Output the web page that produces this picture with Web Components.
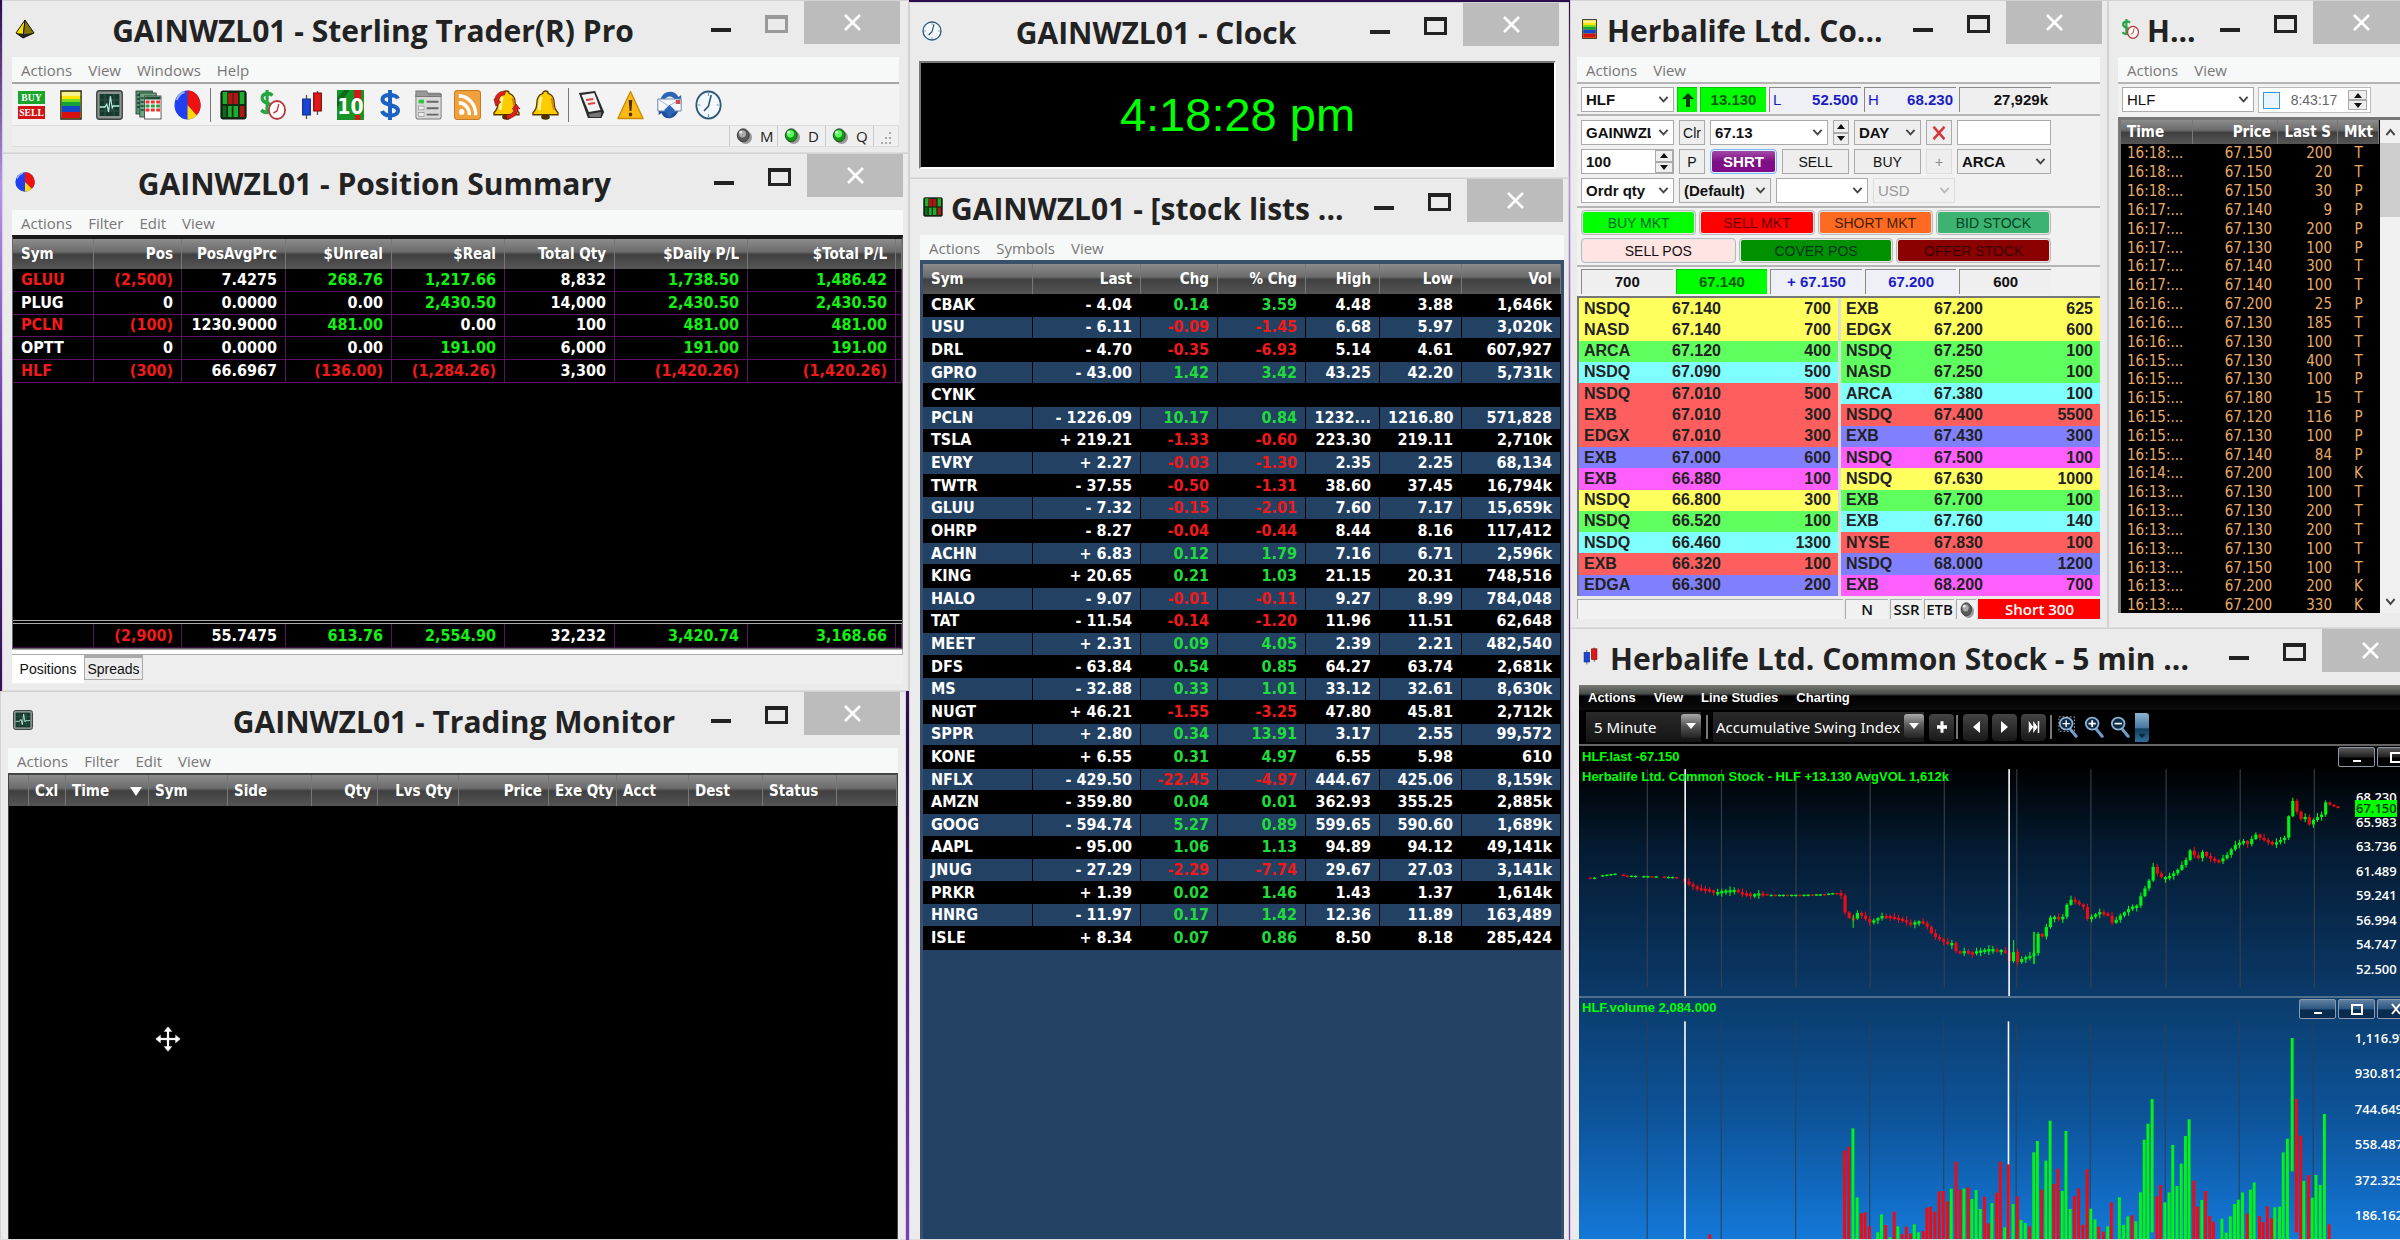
<!DOCTYPE html>
<html lang="en">
<head>
<meta charset="utf-8">
<title>Sterling Trader Pro</title>
<style>
  html, body { margin: 0; height: 100%; }
  body { background: #3a1466; font-family: "Open Sans", "Noto Sans", sans-serif; overflow: hidden; }
</style>
</head>
<body>
<trader-desktop></trader-desktop>

<script>
/* ---------- icons ---------- */
const led = (a, b) => `<svg viewBox="0 0 20 22"><ellipse cx="12" cy="13" rx="8" ry="9" fill="#9a9a9a"/><ellipse cx="9" cy="10" rx="7.5" ry="9" fill="${b}" stroke="#333" stroke-width="1"/><ellipse cx="8" cy="8" rx="4.5" ry="5" fill="${a}"/><circle cx="6" cy="6" r="1.8" fill="#fff" opacity=".8"/></svg>`;
const bell = `<path d="M14 1c1.800 0 2.800 1 2.800 2.400 4.400 1.300 6.200 5 6.200 9.600 0 5 1 7 4 9.800v2H1v-2C4 20 5 18 5 13c0-4.600 1.800-8.300 6.200-9.600C11.200 2 12.200 1 14 1z" fill="#fc0" stroke="#5a3a00" stroke-width="1.400"/><path d="M10 7c-2 3-2 8-2.500 13" stroke="#fff3a0" stroke-width="3" fill="none"/><path d="M20 8c1.500 3 1 8 3 12" stroke="#d88a00" stroke-width="2" fill="none"/><ellipse cx="14" cy="27" rx="4.500" ry="2.800" fill="#4a3000"/>`;
const lens = inner => `<svg viewBox="0 0 22 26"><path d="M13 15l7 9" stroke="#6f9cc8" stroke-width="3.500" stroke-linecap="round"/><circle cx="9" cy="9" r="7" fill="#0d2a48" stroke="#8fb2d4" stroke-width="2"/>${inner}</svg>`;
const ICONS = {
  pyramid: `<svg viewBox="0 0 20 20"><path d="M10 1L1 14l7 5z" fill="#ffe100" stroke="#111"/><path d="M10 1l9 13-11 5z" fill="#877500" stroke="#111"/><path d="M1 14l7 5 11-5-9 1z" fill="#222"/></svg>`,
  pie: `<svg viewBox="0 0 28 30"><ellipse cx="14" cy="15" rx="13.500" ry="14.500" fill="#1f3ff0"/><path d="M14 .5a13.500 14.500 0 0 1 9.500 24.800L14 15z" fill="#ee1111"/><path d="M14 15l9.500 10.300A13.500 14.500 0 0 1 14 29.500z" fill="#ffd800"/><path d="M3 10a12 12 0 0 1 8-8" stroke="#9bb0ff" stroke-width="2" fill="none"/></svg>`,
  monitor: `<svg viewBox="0 0 30 30"><rect x=".8" y=".8" width="28.400" height="28.400" rx="3" fill="#8c9390" stroke="#3c4440" stroke-width="1.500"/><rect x="4" y="4" width="22" height="22" fill="#17382c"/><path d="M4 10h22M4 21h22M10 4v22M20 4v22" stroke="#2d5c4b"/><path d="M4 17h6l2-3 2 8 2-16 2 12 1-2h7" fill="none" stroke="#b7efe0" stroke-width="1.300"/></svg>`,
  buysell: `<svg viewBox="0 0 28 30"><rect y="1" width="28" height="13" fill="#17a52a"/><rect y="16" width="28" height="13" fill="#cf1414"/><text x="14" y="11" font-family="Liberation Serif, serif" font-size="10" font-weight="700" text-anchor="middle" fill="#fff">BUY</text><text x="14" y="26" font-family="Liberation Serif, serif" font-size="10" font-weight="700" text-anchor="middle" fill="#fff">SELL</text></svg>`,
  level: `<svg viewBox="0 0 24 30"><rect x="1" y="1" width="22" height="28" fill="#ffe600" stroke="#222" stroke-width="1.500"/><rect x="2" y="2" width="20" height="4" fill="#f6f08a"/><rect x="2" y="9" width="20" height="4" fill="#7bdc1c"/><rect x="2" y="12" width="20" height="4" fill="#12a33c"/><rect x="2" y="16" width="20" height="6" fill="#1546c8"/><rect x="2" y="22" width="20" height="6" fill="#d81010"/></svg>`,
  sheets: `<svg viewBox="0 0 28 30"><g stroke="#333" stroke-width=".8"><rect x="1" y="1" width="17" height="23" fill="#4f9a6a"/><rect x="5" y="3" width="17" height="24" fill="#6aa880"/><rect x="10" y="6" width="17" height="23" fill="#fff"/></g><path d="M10.500 8h16" stroke="#1d4f34" stroke-width="3"/><path d="M11 12h15M11 20h15" stroke="#e33" stroke-width="3" stroke-dasharray="4 1.500"/><path d="M11 16h15" stroke="#2b9d45" stroke-width="3" stroke-dasharray="4 1.500"/><path d="M2 5h3M2 9h3M2 13h3M2 17h3M6 8h3M6 12h3M6 16h3M6 20h3" stroke="#234" stroke-width="1.500"/></svg>`,
  heat: `<svg viewBox="0 0 30 30"><rect x="1" y="1" width="28" height="28" rx="2" fill="#0f2d12" stroke="#111"/><g fill="#1fae2c"><rect x="3" y="2" width="5" height="12"/><rect x="22" y="2" width="5" height="12"/><rect x="9" y="16" width="4" height="11"/><rect x="15" y="16" width="5" height="11"/></g><g fill="#0c6a1c"><rect x="3" y="16" width="4" height="11"/></g><g fill="#b31515"><rect x="9" y="3" width="5" height="11"/><rect x="15" y="3" width="5" height="11"/><rect x="22" y="16" width="5" height="11"/></g></svg>`,
  dollarclock: `<svg viewBox="0 0 30 30"><path d="M15 5.500C12 2.500 3 3 3.500 8.500s11 4 11 9.500-9 5.500-12 2M9 0v24" fill="none" stroke="#27a544" stroke-width="3.500"/><circle cx="20" cy="20" r="9" fill="#fff" stroke="#b83a3a" stroke-width="2"/><path d="M22 14l-2 7-4 2" stroke="#c33" stroke-width="1.500" fill="none"/></svg>`,
  candles: `<svg viewBox="0 0 20 30"><path d="M5 5v24M15 1v24" stroke="#555" stroke-width="1.200"/><rect x="1.500" y="9" width="7" height="16" fill="#1a45d8" stroke="#0a2c80"/><rect x="11.500" y="3" width="7" height="18" fill="#e01818" stroke="#7d0909"/></svg>`,
  ten: `<svg viewBox="0 0 30 30"><rect width="30" height="30" fill="#169425"/><path d="M0 8L8 0h6L0 18zM18 0h5v6z" fill="#0c6a18"/><path d="M19 0h8v9l-4 4-4-4zM20 25h6v5h-6z" fill="#cf1a1a"/><text x="15" y="24" font-family="DejaVu Sans, sans-serif" font-weight="700" font-size="21" text-anchor="middle" fill="#fff">10</text></svg>`,
  dollar: `<svg viewBox="0 0 22 30"><path d="M19 8.500C17 4 3.500 3 3.500 9.500S19 14 19 20.500 5 27 3 21M11 0v30" fill="none" stroke="#1b62c4" stroke-width="4"/></svg>`,
  list: `<svg viewBox="0 0 30 28"><rect x="1" y="3" width="28" height="24" rx="2" fill="#d8d8d8" stroke="#777"/><path d="M1 6V1h12l2 3h14v2z" fill="#999" stroke="#777"/><path d="M13 11h13M13 17h13M13 23h13" stroke="#666" stroke-width="1.800"/><rect x="4" y="9" width="6" height="3.500" fill="#35c23f"/><rect x="4" y="15" width="6" height="3.500" fill="#eee" stroke="#888" stroke-width=".6"/><rect x="4" y="21" width="6" height="3.500" fill="#eee" stroke="#888" stroke-width=".6"/></svg>`,
  rss: `<svg viewBox="0 0 28 28"><rect x=".5" y=".5" width="27" height="27" rx="3" fill="#f0a03c" stroke="#c87a1c"/><circle cx="8" cy="20.500" r="2.800" fill="#fff"/><path d="M5 12a11 11 0 0 1 11 11.500M5 5.500A17.500 17.500 0 0 1 22.500 23.500" fill="none" stroke="#fff" stroke-width="3.400"/></svg>`,
  bellout: `<svg viewBox="0 0 28 30">${bell}<path d="M2 9C3 4 7 1 13 1l-1 4C8 5 6 7 6 11l2 1-5 4-2-7zM26 18c0 6-4 10-12 11v-4c4 0 7-2 8-5l-2-1 4-5 4 5z" fill="#d8201c" stroke="#8d0c0a" stroke-width=".7"/></svg>`,
  bell: `<svg viewBox="0 0 28 30">${bell}</svg>`,
  pad: `<svg viewBox="0 0 30 30"><path d="M1 3L19 1l10 21-3 6H11z" fill="#2b2b2b"/><path d="M4 5l14-2 7 17-13 2z" fill="#f4f4f4"/><path d="M9 10l8-1M11 14l8-1" stroke="#d44" stroke-width="1.800"/><path d="M12 24l14-2-1 5H13z" fill="#777"/></svg>`,
  warn: `<svg viewBox="0 0 30 30"><path d="M15 1.500L29 28.500H1z" fill="#fdb913" stroke="#c98a05" stroke-width="1.500" stroke-linejoin="round"/><path d="M13 10h4l-1 11h-2z" fill="#4a2c00"/><circle cx="15" cy="24.500" r="1.900" fill="#4a2c00"/></svg>`,
  refresh: `<svg viewBox="0 0 30 30"><path d="M5 10C7 0 21-1 25 7l3-2v10h-9l3-4C19 5 11 5 9 11z" fill="#2a66b8"/><path d="M25 20c-3 10-16 11-19 3l-3 2V15h9l-3 4c3 6 10 6 12 1z" fill="#1d4f9c"/><path d="M2 9h26v12H2z" fill="#f6f9ff" stroke="#6a84ac"/><path d="M2 9l12 7L28 9" fill="none" stroke="#9db3d0"/><rect x="22" y="10" width="5" height="4" fill="#d04a4a"/><path d="M9 20l6-5 6 5-6 8z" fill="#2a66b8"/></svg>`,
  clock: `<svg viewBox="0 0 30 30"><circle cx="15" cy="15" r="13.500" fill="#f2f8fc" stroke="#2f5878" stroke-width="2"/><path d="M15 3v3M15 24v3M3 15h3M24 15h3" stroke="#7796ac" stroke-width="1.200"/><path d="M18 5l-3 11-5 5" fill="none" stroke="#27506e" stroke-width="1.700"/></svg>`,
  ledOff: led("#aaa", "#5a5a5a"), ledOn: led("#5dff5d", "#0d9a12"),
  chevron: `<svg viewBox="0 0 12 10"><path d="M1.500 2L6 7l4.500-5" fill="none" stroke="currentColor" stroke-width="2"/></svg>`,
  up: `<svg viewBox="0 0 14 18"><path d="M7 1l6 7H9v9H5V8H1z" fill="#063806"/></svg>`,
  cross: `<svg viewBox="0 0 14 14"><path d="M1.500 1.500l11 11M12.500 1.500l-11 11" stroke="#d8383c" stroke-width="2.400"/></svg>`,
  left: `<svg viewBox="0 0 12 14"><path d="M10 1v12L3 7z" fill="#fff"/></svg>`,
  right: `<svg viewBox="0 0 12 14"><path d="M2 1v12l7-6z" fill="#fff"/></svg>`,
  end: `<svg viewBox="0 0 16 14"><path d="M1 1v12l6-6zM7 1v12l6-6z" fill="#fff"/><path d="M14 1v12" stroke="#fff" stroke-width="2"/></svg>`,
  plus: `<svg viewBox="0 0 12 12"><path d="M6 1v10M1 6h10" stroke="#fff" stroke-width="3"/></svg>`,
  drop: `<svg viewBox="0 0 10 8"><path d="M0 1h10L5 7z" fill="#fff"/></svg>`,
  more: `<svg viewBox="0 0 10 8"><path d="M0 1h10L5 7z" fill="#0a2b42"/></svg>`,
  zoomBox: lens(`<path d="M9 5v8M5 9h8" stroke="#fff" stroke-width="1.500"/><rect x="1" y="1" width="17" height="17" fill="none" stroke="#a9c6e2" stroke-dasharray="2 2"/>`),
  zoomIn: lens(`<path d="M9 5v8M5 9h8" stroke="#fff" stroke-width="2"/>`),
  zoomOut: lens(`<path d="M5 9h8" stroke="#fff" stroke-width="2"/>`),
  move: `<svg viewBox="0 0 26 26"><path d="M13 0l5 6h-3.500v5.500H20V8l6 5-6 5v-3.500h-5.500V20H18l-5 6-5-6h3.500v-5.500H6V18l-6-5 6-5v3.500h5.500V6H8z" fill="#fff" stroke="#000" stroke-width=".8"/></svg>`
};

/* Small base class: every element renders its markup once into an open root. */
class Piece extends HTMLElement {
  connectedCallback() {
    if (this.shadowRoot) return;
    this.attachShadow({ mode: "open" }).innerHTML =
      `<style>*{box-sizing:border-box}${this.css()}</style>${this.html()}`;
  }
  css() { return ""; }
  html() { return "<slot></slot>"; }
  get(name, fallback = "") { return this.getAttribute(name) ?? fallback; }
}
const define = (name, cls) => customElements.define(name, cls);

define("app-icon", class extends Piece {
  css() { return `:host{display:block;flex:none;width:var(--w,20px);height:var(--h,20px)} svg{display:block;width:100%;height:100%;overflow:visible}`; }
  html() { return ICONS[this.get("name")].replace("<svg", '<svg aria-hidden="true" preserveAspectRatio="none"'); }
});

/* ---------- window frame ---------- */
define("desk-window", class extends Piece {
  css() { return `
    :host{display:flex;flex-direction:column;background:#ebebeb;border:1px solid #d2d2d2;border-bottom-color:#dcdcdc;min-width:0;min-height:0}
    header{display:flex;height:var(--bar,56px);flex:none;align-items:flex-start;padding:0 var(--hr,5px) 0 var(--lead,12px)}
    .ic{margin-top:18px;--w:var(--iw,20px);--h:var(--ih,20px)}
    h1{flex:1;min-width:0;height:100%;margin:0;padding-left:var(--title-pad,0);text-align:var(--align,center);font:700 30px/60px "Open Sans","Noto Sans",sans-serif;color:#222;white-space:nowrap;overflow:hidden}
    button{font:inherit;border:0;background:none;padding:0;margin:0;flex:none}
    .min{width:20px;height:31px;border-bottom:4px solid #222}
    .max{width:23px;height:18px;margin:14px 16px 0 34px;border:3px solid #222;border-top-width:4px}
    :host([idle]) .max{border-color:#999}
    .x{width:96px;height:43px;background:#bcbcbc;display:grid;place-items:center}
    .x svg{width:19px;height:17px}
    main{flex:1;min-height:0;display:flex;flex-direction:column;padding:0 var(--pr,6px) var(--pb,6px) var(--pl,9px)}`; }
  html() { return `<header><app-icon class="ic" name="${this.get("icon")}"></app-icon><h1>${this.get("heading")}</h1>
    <button class="min" aria-label="Minimize"></button><button class="max" aria-label="Maximize"></button>
    <button class="x" aria-label="Close"><svg viewBox="0 0 19 17"><path d="M2 1l15 15M17 1L2 16" stroke="#fff" stroke-width="2.600"/></svg></button></header>
    <main><slot></slot></main>`; }
});

define("menu-bar", class extends Piece {
  css() { return `
    :host{display:flex;flex:none;height:25px;background:#f7f8f8;align-items:center;gap:16px;padding-left:9px}
    button{border:0;background:none;padding:0;font:15px/20px "Open Sans","Noto Sans",sans-serif;color:#777}
    :host([dark]){background:linear-gradient(#777b73,#4a4d48 35%,#000 45%,#0c0c0c);gap:18px}
    :host([dark]) button{font:700 13px/20px "Liberation Sans",Arial,sans-serif;color:#fff}`; }
  html() { return this.get("items").split(",").map(i => `<button>${i}</button>`).join(""); }
});

/* ---------- data ---------- */
const lines = s => s.trim().split("\n").map(l => l.trim().split("|"));
const GRIDS = {
  positions: {
    cols: [["Sym",81,"l"],["Pos",88],["PosAvgPrc",104],["$Unreal",106],["$Real",113],["Total Qty",110],["$Daily P/L",133],["$Total P/L",148],["",0]],
    rows: lines(`r:GLUU|r:(2,500)|7.4275|g:268.76|g:1,217.66|8,832|g:1,738.50|g:1,486.42|
      PLUG|0|0.0000|0.00|g:2,430.50|14,000|g:2,430.50|g:2,430.50|
      r:PCLN|r:(100)|1230.9000|g:481.00|0.00|100|g:481.00|g:481.00|
      OPTT|0|0.0000|0.00|g:191.00|6,000|g:191.00|g:191.00|
      r:HLF|r:(300)|66.6967|r:(136.00)|r:(1,284.26)|3,300|r:(1,420.26)|r:(1,420.26)|`),
    css: `table{height:144px}tbody td{border-right:1px solid #5c1263;border-bottom:1px solid #5c1263}`
  },
  totals: {
    bare: true,
    cols: [["",81],["",88],["",104],["",106],["",113],["",110],["",133],["",148],["",0]],
    rows: lines(`|r:(2,900)|55.7475|g:613.76|g:2,554.90|32,232|g:3,420.74|g:3,168.66|`),
    css: `td{height:24px;border-right:1px solid #5c1263;border-bottom:1px solid #3c0a42}`
  },
  orders: {
    cols: [["",20],["Cxl",37,"l"],["Time",83,"l",1],["Sym",79,"l"],["Side",84,"l"],["Qty",66],["Lvs Qty",81],["Price",90],["Exe Qty",68,"l"],["Acct",72,"l"],["Dest",74,"l"],["Status",74,"l"],["",0]],
    rows: [], css: `th{height:31px;padding:0 6px}`
  },
  stocks: {
    cols: [["Sym",110,"l"],["Last",108],["Chg",77],["% Chg",88],["High",74],["Low",82],["Vol",0]],
    rows: lines(`CBAK|- 4.04|0.14|3.59|4.48|3.88|1,646k
      USU|- 6.11|-0.09|-1.45|6.68|5.97|3,020k
      DRL|- 4.70|-0.35|-6.93|5.14|4.61|607,927
      GPRO|- 43.00|1.42|3.42|43.25|42.20|5,731k
      CYNK||||||
      PCLN|- 1226.09|10.17|0.84|1232...|1216.80|571,828
      TSLA|+ 219.21|-1.33|-0.60|223.30|219.11|2,710k
      EVRY|+ 2.27|-0.03|-1.30|2.35|2.25|68,134
      TWTR|- 37.55|-0.50|-1.31|38.60|37.45|16,794k
      GLUU|- 7.32|-0.15|-2.01|7.60|7.17|15,659k
      OHRP|- 8.27|-0.04|-0.44|8.44|8.16|117,412
      ACHN|+ 6.83|0.12|1.79|7.16|6.71|2,596k
      KING|+ 20.65|0.21|1.03|21.15|20.31|748,516
      HALO|- 9.07|-0.01|-0.11|9.27|8.99|784,048
      TAT|- 11.54|-0.14|-1.20|11.96|11.51|62,648
      MEET|+ 2.31|0.09|4.05|2.39|2.21|482,540
      DFS|- 63.84|0.54|0.85|64.27|63.74|2,681k
      MS|- 32.88|0.33|1.01|33.12|32.61|8,630k
      NUGT|+ 46.21|-1.55|-3.25|47.80|45.81|2,712k
      SPPR|+ 2.80|0.34|13.91|3.17|2.55|99,572
      KONE|+ 6.55|0.31|4.97|6.55|5.98|610
      NFLX|- 429.50|-22.45|-4.97|444.67|425.06|8,159k
      AMZN|- 359.80|0.04|0.01|362.93|355.25|2,885k
      GOOG|- 594.74|5.27|0.89|599.65|590.60|1,689k
      AAPL|- 95.00|1.06|1.13|94.89|94.12|49,141k
      JNUG|- 27.29|-2.29|-7.74|29.67|27.03|3,141k
      PRKR|+ 1.39|0.02|1.46|1.43|1.37|1,614k
      HNRG|- 11.97|0.17|1.42|12.36|11.89|163,489
      ISLE|+ 8.34|0.07|0.86|8.50|8.18|285,424`)
      .map(r => r.map((c, i) => (i === 2 || i === 3) && c ? (c[0] === "-" ? "r:" : "s:") + c : c)),
    css: `table{height:686px}tbody tr{background:#000}tbody tr:nth-child(even){background:#234162}
      tbody td{border-bottom:1px solid #000;border-right:1px solid #000}`
  },
  ticks: {
    cols: [["Time",72,"l"],["Price",85],["Last S",60],["Mkt",41,"c"]],
    rows: lines(`16:18:...|67.150|200|T
      16:18:...|67.150|20|T
      16:18:...|67.150|30|P
      16:17:...|67.140|9|P
      16:17:...|67.130|200|P
      16:17:...|67.130|100|P
      16:17:...|67.140|300|T
      16:17:...|67.140|100|T
      16:16:...|67.200|25|P
      16:16:...|67.130|185|T
      16:16:...|67.130|100|T
      16:15:...|67.130|400|T
      16:15:...|67.130|100|P
      16:15:...|67.180|15|T
      16:15:...|67.120|116|P
      16:15:...|67.130|100|P
      16:15:...|67.140|84|P
      16:14:...|67.200|100|K
      16:13:...|67.130|100|T
      16:13:...|67.130|200|T
      16:13:...|67.130|200|T
      16:13:...|67.130|100|T
      16:13:...|67.150|100|T
      16:13:...|67.200|200|K
      16:13:...|67.200|330|K`),
    css: `table{height:495px}th{height:24px;padding:0 6px}td{font-weight:400;font-size:15px;line-height:18px;color:#e8aa66;padding:0 6px}`
  }
};

define("data-grid", class extends Piece {
  css() { return `
    :host{display:block;flex:none}
    table{border-collapse:separate;border-spacing:0;table-layout:fixed;width:100%;font:700 16px/20px "DejaVu Sans Condensed","DejaVu Sans",sans-serif;color:#fff}
    th,td{padding:0 8px;text-align:right;white-space:nowrap;overflow:hidden}
    th{height:30px;font-size:15px;background:linear-gradient(#8c8c8c,#6c6c6c 42%,#404040 52%,#565656);border-right:1px solid #777}
    .l{text-align:left}.c{text-align:center}
    th.sort span{float:right;width:0;border:6px solid transparent;border-top:9px solid #fff;border-bottom:0;margin:6px 0 0 0}
    .r{color:#f01a1a}.g{color:#14f014}.s{color:#1fdc3c}
    ${GRIDS[this.get("source")].css}`; }
  html() {
    const { cols, rows, bare } = GRIDS[this.get("source")];
    const cell = (c, i) => {
      const m = /^([rgs]):(.*)/.exec(c), cls = [cols[i][2], m && m[1]].filter(Boolean).join(" ");
      return `<td class="${cls}">${m ? m[2] : c}</td>`;
    };
    return `<table><colgroup>${cols.map(c => c[1] ? `<col style="width:${c[1]}px">` : "<col>").join("")}</colgroup>
      ${bare ? "" : `<thead><tr>${cols.map(c => `<th scope="col" class="${c[2] || ""} ${c[3] ? "sort" : ""}">${c[3] ? "<span></span>" : ""}${c[0]}</th>`).join("")}</tr></thead>`}
      <tbody>${rows.map(r => `<tr>${r.map(cell).join("")}</tr>`).join("")}</tbody></table>`;
  }
});

/* ---------- main toolbar ---------- */
define("main-tools", class extends Piece {
  css() { return `
    :host{display:flex;flex-direction:column;flex:1}
    .bar{display:flex;height:43px;align-items:center;border-top:2px solid #a5a5a5;background:#f3f3f3}
    button{width:39px;height:36px;border:0;padding:0;background:none;display:grid;place-items:center}
    app-icon{--w:27px;--h:30px}
    .narrow{--w:22px}
    i{width:1px;height:34px;background:#777;margin:0 3px}
    .status{flex:1;display:flex;justify-content:flex-end;border:1px solid #ddd;border-left:0;background:#efefef}
    .status span{width:48px;display:flex;align-items:center;gap:8px;padding-left:6px;border-left:1px solid #ccc;font:15px/20px "Open Sans",sans-serif;color:#222}
    .status app-icon{--w:16px;--h:16px}
    .grip{width:25px;border-left:1px solid #ccc;display:grid;place-items:end center}
    .grip svg{width:12px;height:14px}`; }
  html() {
    const b = (n, label) => `<button aria-label="${label}"><app-icon name="${n}" class="${/^(level|candles|dollar)$/.test(n) ? "narrow" : ""}"></app-icon></button>`;
    return `<div class="bar">${b("buysell","Order entry")}${b("level","Level II")}${b("monitor","Trading monitor")}${b("sheets","Order book")}${b("pie","Positions")}<i></i>
      ${b("heat","Stock list")}${b("dollarclock","Time and sales")}${b("candles","Chart")}${b("ten","Top ten")}${b("dollar","Balances")}${b("list","Watch list")}${b("rss","News")}${b("bellout","Alert setup")}${b("bell","Alerts")}<i></i>
      ${b("pad","Notes")}${b("warn","Warnings")}${b("refresh","Messages")}${b("clock","Clock")}</div>
      <div class="status"><span><app-icon name="ledOff"></app-icon>M</span><span><app-icon name="ledOn"></app-icon>D</span><span><app-icon name="ledOn"></app-icon>Q</span>
      <div class="grip"><svg viewBox="0 0 12 14" fill="#aaa"><path d="M9 0h2v2H9zM9 5h2v2H9zM9 10h2v2H9zM5 5h2v2H5zM5 10h2v2H5zM1 10h2v2H1z"/></svg></div></div>`;
  }
});

define("position-pane", class extends Piece {
  css() { return `
    :host{display:flex;flex-direction:column;flex:1}
    .list{flex:1;background:#000;border:1px solid #666;border-top:4px solid #1a1a1a;display:flex;flex-direction:column}
    .sum{margin-top:auto;border-top:4px double #aaa;background:#000}
    .strip{height:6px;background:#fff;border:1px solid #aaa;border-left:0}
    nav{display:flex;align-items:flex-start;height:29px;background:#efefef}
    nav button{border:0;background:#fff;font:14px/20px "Liberation Sans",Arial,sans-serif;color:#111;padding:0;width:72px;height:28px}
    nav button+button{width:59px;height:25px;background:#ececec;border:1px solid #aaa;border-top-width:3px;line-height:18px}`; }
  html() { return `<div class="list"><data-grid source="positions"></data-grid><data-grid class="sum" source="totals"></data-grid></div>
    <div class="strip"></div><nav><button>Positions</button><button>Spreads</button></nav>`; }
});

define("monitor-pane", class extends Piece {
  css() { return `
    :host{display:block;flex:1;background:#000;border:1px solid #444;border-width:2px 1px 0;position:relative}
    app-icon{position:absolute;left:146px;top:251px;--w:26px;--h:26px}`; }
  html() { return `<data-grid source="orders"></data-grid><app-icon name="move"></app-icon>`; }
});

define("clock-face", class extends Piece {
  css() { return `:host{flex:1;display:grid;place-items:center;background:#000;border:2px solid #777;border-right-color:#fff;border-bottom-color:#fff;color:#0f0;font:47px/52px "Liberation Sans",Arial,sans-serif}`; }
  html() { return `<time>4:18:28 pm</time>`; }
});

define("stock-pane", class extends Piece {
  css() { return `:host{display:block;flex:1;background:#234162;border:3px solid #39506c;border-top-width:4px;border-bottom:0}`; }
  html() { return `<data-grid source="stocks"></data-grid>`; }
});

/* ---------- form parts ---------- */
define("combo-box", class extends Piece {
  css() { return `
    :host{display:block;position:relative;flex:none;height:25px;color:#111}
    select{width:100%;height:100%;border:1px solid #aaa;border-radius:0;background:var(--bg,#fff);color:inherit;appearance:none;margin:0;padding:0 22px 0 4px;font:var(--font,700 15px "Liberation Sans",Arial,sans-serif);outline:0;opacity:1}
    app-icon{position:absolute;right:5px;top:8px;--w:11px;--h:9px;color:#444;pointer-events:none}
    :host([off]){color:#999}:host([off]) select{border-color:#ddd}:host([off]) app-icon{color:#bbb}`; }
  html() { return `<select aria-label="${this.get("label")}" ${this.hasAttribute("off") ? "disabled" : ""}><option>${this.get("value")}</option></select><app-icon name="chevron"></app-icon>`; }
});

define("spin-keys", class extends Piece {
  css() { return `
    :host{display:flex;flex-direction:column;flex:none;width:16px;height:25px}
    button{flex:1;border:1px solid #aaa;background:#eee;padding:0;display:grid;place-items:center;min-height:0}
    span{border:4px solid transparent;border-bottom:5px solid #111;border-top:0}
    .d{border-top:5px solid #111;border-bottom:0}`; }
  html() { return `<button aria-label="Up"><span></span></button><button aria-label="Down"><span class="d"></span></button>`; }
});

/* ---------- order ticket ---------- */
const BOOK = {
  bids: lines(`NSDQ|67.140|700|y
    NASD|67.140|700|y
    ARCA|67.120|400|g
    NSDQ|67.090|500|c
    NSDQ|67.010|500|r
    EXB|67.010|300|r
    EDGX|67.010|300|r
    EXB|67.000|600|b
    EXB|66.880|100|m
    NSDQ|66.800|300|y
    NSDQ|66.520|100|g
    NSDQ|66.460|1300|c
    EXB|66.320|100|r
    EDGA|66.300|200|b`),
  asks: lines(`EXB|67.200|625|y
    EDGX|67.200|600|y
    NSDQ|67.250|100|g
    NASD|67.250|100|g
    ARCA|67.380|100|c
    NSDQ|67.400|5500|r
    EXB|67.430|300|b
    NSDQ|67.500|100|m
    NSDQ|67.630|1000|y
    EXB|67.700|100|g
    EXB|67.760|140|c
    NYSE|67.830|100|r
    NSDQ|68.000|1200|b
    EXB|68.200|700|m`)
};
define("depth-book", class extends Piece {
  css() { return `
    :host{display:flex;gap:3px;border-top:2px solid #777;border-left:2px solid #777;background:#ddd;flex:none;height:300px;overflow:hidden}
    table{flex:1;height:100%;border-spacing:0;table-layout:fixed;font:700 16px/20px "Liberation Sans",Arial,sans-serif;color:#222}
    td{padding:0 5px}td:first-child{width:88px}td:last-child{text-align:right;padding-right:7px}
    .y{background:#ffff5e}.g{background:#5eff5e}.c{background:#80ffff}.r{background:#ff5e5e}.b{background:#8080ff}.m{background:#ff5eff}`; }
  html() { return ["bids", "asks"].map(k => `<table aria-label="${k}"><tbody>${BOOK[k].map(r => `<tr class="${r[3]}"><td>${r[0]}</td><td>${r[1]}</td><td>${r[2]}</td></tr>`).join("")}</tbody></table>`).join(""); }
});

define("order-ticket", class extends Piece {
  css() { return `
    :host{display:flex;flex-direction:column;flex:1;font:700 15px/20px "Liberation Sans",Arial,sans-serif;color:#111}
    .sec{border-top:2px solid #b5b5b5;background:#f1f1f1;padding:2px 49px 2px 4px;display:flex;flex-direction:column;gap:4px;flex:none}
    .first{padding-top:3px}
    .entry{padding-top:4px;padding-bottom:3px}
    .keys{gap:3px}
    .row{display:flex;gap:5px;height:25px}
    .tight{gap:3px}
    .w93{width:93px}.w92{width:92px}.w26{width:26px}.w67{width:67px}.grow{flex:1}
    .cell{border-top:1px solid #888;border-left:1px solid #888;background:#eef0f6;display:flex;align-items:center;justify-content:flex-end;padding:0 3px;min-width:0}
    .cell.mid{justify-content:center}
    .cell b{font-weight:400;margin-right:auto}
    .blue{color:#1c1cc4}
    .lime{background:#0f0;color:#0a5a0a;border-color:#0c0}
    .plain{background:#efefef}
    button{border:1px solid #aaa;background:#eee;padding:0;font:14px/18px "Liberation Sans",Arial,sans-serif;color:#111;display:grid;place-items:center}
    .dim{color:#888;border-color:#ddd}
    .shrt{font-weight:700;font-size:15px;color:#fff;background:linear-gradient(#a24aa6,#7d0f86 50%,#820b88);border:2px solid #dff0ff;outline:1px solid #7ab8f0;outline-offset:-1px;border-radius:4px}
    .qty{display:flex;border:1px solid #aaa;background:#fff}
    input{border:1px solid #aaa;background:#fff;min-width:0;width:100%;padding:0 4px;font:inherit;color:inherit;outline:0;margin:0;border-radius:0}
    .qty input{border:0;flex:1}.qty spin-keys{width:18px;height:23px}
    .keys button{flex:1;border:2px solid #e8e8e8;outline:1px solid #b9b9b9;outline-offset:-1px;border-radius:4px}
    .keys .k1{background:#0f0;color:#063}.keys .k2{background:#f00;color:#600}.keys .k3{background:#ff6a22;color:#420}.keys .k4{background:#3cb371;color:#042}
    .keys .k5{background:#ffe4e1}.keys .k6{background:#009000;color:#032}.keys .k7{background:#8b0000;color:#3a0000}
    .foot{display:flex;gap:2px;margin-top:3px;height:20px;font:600 15px/19px "Open Sans",sans-serif;flex:none}
    .foot span{border-top:1px solid #aaa;border-left:1px solid #aaa;text-align:center;background:#f1f1f1}
    .foot .s{background:#f00;color:#fff;border-color:#f00;width:122px}
    app-icon{--w:14px;--h:16px}`; }
  html() { return `
    <div class="sec first"><div class="row tight">
      <combo-box class="w93" label="Symbol" value="HLF"></combo-box>
      <span class="cell mid lime" style="width:20px"><app-icon name="up"></app-icon></span>
      <span class="cell mid lime" style="width:66px">13.130</span>
      <span class="cell blue grow"><b>L</b>52.500</span><span class="cell blue grow"><b>H</b>68.230</span><span class="cell grow plain">27,929k</span></div></div>
    <div class="sec entry">
      <div class="row"><combo-box class="w93" label="Account" value="GAINWZL01"></combo-box><button class="w26">Clr</button>
        <combo-box style="width:118px" label="Price" value="67.13"></combo-box><spin-keys></spin-keys>
        <combo-box class="w67" style="--bg:#eee" label="Time in force" value="DAY"></combo-box>
        <button class="w26" aria-label="Cancel"><app-icon name="cross"></app-icon></button><input class="grow" aria-label="Note"></div>
      <div class="row"><div class="qty w93"><input value="100" aria-label="Quantity"><spin-keys></spin-keys></div><button class="w26">P</button>
        <button class="shrt w67">SHRT</button><button class="w67">SELL</button><button class="w67">BUY</button><button class="w26 dim">+</button>
        <combo-box class="grow" style="--bg:#eee" label="Route" value="ARCA"></combo-box></div>
      <div class="row"><combo-box class="w93" label="Quantity type" value="Ordr qty"></combo-box><combo-box class="w92" style="--bg:#eee" label="Profile" value="(Default)"></combo-box>
        <combo-box class="w92" label="Condition" value=""></combo-box><combo-box off style="width:82px;--bg:#f1f1f1;--font:400 15px Liberation Sans,Arial,sans-serif" label="Currency" value="USD"></combo-box></div></div>
    <div class="sec keys"><div class="row tight"><button class="k1">BUY MKT</button><button class="k2">SELL MKT</button><button class="k3">SHORT MKT</button><button class="k4">BID STOCK</button></div>
      <div class="row tight"><button class="k5">SELL POS</button><button class="k6">COVER POS</button><button class="k7">OFFER STOCK</button></div></div>
    <div class="sec"><div class="row tight"><span class="cell mid grow plain">700</span><span class="cell mid lime grow">67.140</span><span class="cell mid blue grow">+ 67.150</span><span class="cell mid blue grow">67.200</span><span class="cell mid grow plain">600</span></div></div>
    <depth-book></depth-book>
    <div class="foot"><span class="grow"></span><span style="width:43px">N</span><span style="width:32px">SSR</span><span style="width:30px">ETB</span><span style="width:20px;display:grid;place-items:center"><app-icon name="ledOff"></app-icon></span><span class="s">Short 300</span></div>`; }
});

/* ---------- time and sales ---------- */
define("tick-pane", class extends Piece {
  css() { return `
    :host{display:flex;flex-direction:column;flex:1;min-height:0}
    .bar{display:flex;gap:4px;height:35px;padding:3px 4px;border-top:2px solid #b5b5b5;background:#f1f1f1;flex:none}
    combo-box{width:132px;--font:15px Liberation Sans,Arial,sans-serif}
    label{display:flex;align-items:center;width:113px;height:26px;border:1px solid #bbb;background:#fff;padding:0 3px 0 4px;font:14px/20px "Liberation Sans",Arial,sans-serif;color:#666}
    label span{flex:1;text-align:center}
    label input{appearance:none;width:17px;height:17px;margin:0;border:1px solid #3d94e0;background:#e8f5ff}
    label spin-keys{width:19px;height:20px}
    .body{flex:1;min-height:0;display:flex;border-top:3px solid #777;border-left:3px solid #777;background:#000;overflow:hidden}
    data-grid{width:258px}
    .scroll{background:#f0f0f0;margin-left:1px;display:flex;flex-direction:column;align-items:center;flex:1;max-width:20px}
    .scroll app-icon{--w:11px;--h:10px;color:#444;margin:7px 0 6px}
    .up{transform:rotate(180deg)}
    .thumb{width:100%;height:74px;background:#cdcdcd;margin-bottom:auto}`; }
  html() { return `<div class="bar"><combo-box label="Symbol" value="HLF"></combo-box><label><input type="checkbox" aria-label="Filter from time"><span>8:43:17</span><spin-keys></spin-keys></label></div>
    <div class="body"><data-grid source="ticks"></data-grid><div class="scroll"><app-icon class="up" name="chevron"></app-icon><div class="thumb"></div><app-icon name="chevron"></app-icon></div></div>`; }
});

/* ---------- chart ---------- */
const TRACE = [[38,356],[46,357],[60,349],[85,344],[100,350],[150,352],[205,355],[213,363],[221,372],[228,380],[240,388],[260,392],[275,402],[290,395],[310,393],[320,402],[345,408],[355,403],[370,408],[440,408],[480,406],[500,402],[511,404],[519,460],[527,478],[535,480],[542,462],[550,470],[566,492],[580,480],[592,470],[615,478],[625,482],[640,495],[655,490],[662,487],[675,505],[685,530],[700,545],[715,557],[723,553],[730,582],[745,578],[755,584],[770,578],[790,572],[821,577],[829,613],[837,578],[845,612],[855,600],[868,592],[875,598],[880,555],[886,515],[893,537],[900,505],[910,468],[920,480],[928,486],[935,458],[942,420],[950,425],[960,435],[970,445],[977,482],[990,470],[1000,460],[1015,468],[1025,495],[1040,470],[1060,445],[1072,440],[1080,405],[1093,370],[1101,322],[1110,345],[1120,358],[1135,350],[1150,330],[1165,300],[1172,272],[1185,302],[1195,278],[1205,295],[1225,308],[1240,290],[1255,258],[1272,245],[1280,255],[1295,225],[1305,238],[1328,255],[1350,235],[1357,175],[1365,122],[1374,160],[1382,182],[1392,168],[1397,198],[1405,180],[1420,165],[1427,128],[1437,137],[1455,148]];
const VOLUME = "264,766r 519,515r 527,503r 535,448g 543,655g 551,703r 558,700r 566,742r 582,760g 589,706g 597,738r 605,775g 613,698r 620,742g 628,765r 636,743r 644,764r 651,736g 659,760g 668,756r 675,686r 682,683r 690,698r 698,637r 706,636r 714,667r 721,629g 730,548r 738,632r 745,629g 753,625r 760,660g 768,633g 776,690g 784,653r 791,733r 798,672g 807,641r 814,548r 822,745g 829,556r 838,675g 846,652r 853,723g 861,732g 869,742r 877,520g 884,486g 892,632r 900,545g 908,425g 915,615r 923,569r 931,636g 938,456g 946,690g 954,652r 962,628r 970,737r 978,571r 985,689g 993,721g 1000,743r 1009,758r 1017,742g 1024,670r 1039,655g 1047,738g 1055,712g 1063,709r 1070,727g 1079,640g 1086,482g 1093,434g 1101,360g 1110,652r 1117,618r 1125,670g 1133,640g 1140,498g 1148,621g 1156,554g 1164,471g 1171,421g 1180,605r 1187,683r 1195,663g 1202,636r 1210,711r 1217,728r 1233,719g 1241,761g 1249,712g 1257,675g 1264,662g 1272,640g 1281,704r 1287,632g 1294,610g 1304,711r 1311,729r 1319,682r 1327,718r 1333,685g 1342,683g 1349,520g 1357,479g 1366,177g 1374,360r 1382,470r 1388,606g 1397,588r 1404,656g 1411,588g 1419,618g 1427,405g 1436,736r";
const paint = k => k === "g" ? "#00f516" : "#ee0c14";
const gridLines = (y, h, fill) => [145,285,426,566,706,843,983,1125,1265,1405].map(x => `<rect x="${x}" y="${y}" width="2" height="${h}" fill="${fill}"/>`).join("");
const dayLines = (y, h) => [216,828].map(x => `<rect x="${x}" y="${y}" width="3" height="${h}" fill="#fff"/>`).join("");

function candles() {
  const at = x => {
    const i = Math.max(1, TRACE.findIndex(p => p[0] >= x));
    const [x0, y0] = TRACE[i - 1], [x1, y1] = TRACE[i];
    return y0 + (y1 - y0) * (x - x0) / (x1 - x0);
  };
  let out = "", n = 0;
  for (let x = 38.5; x < 1455; x += 7.76, n++) {
    const a = at(Math.max(38, x - 7.76)), b = at(x);
    const quiet = x < 210 || (x > 365 && x < 510) || x > 1440;
    if (x < 210 && n % 5 === 2) continue;
    const k = Math.abs(a - b) < 1.5 ? (n % 3 ? "g" : "r") : (b < a ? "g" : "r");
    const top = Math.min(a, b), h = Math.max(quiet ? 4 : 7, Math.abs(a - b));
    const w1 = quiet ? 1 : 3 + (n * 7 % 10), w2 = quiet ? 1 : 3 + (n * 5 % 9);
    out += `<rect x="${x - 3}" y="${top}" width="6" height="${h}" fill="${paint(k)}"/><rect x="${x - 1}" y="${top - w1}" width="2" height="${h + w1 + w2}" fill="${paint(k)}"/>`;
  }
  return out + `<rect x="534" y="470" width="2" height="38" fill="${paint("g")}"/><rect x="837" y="545" width="2" height="60" fill="${paint("g")}"/><rect x="875" y="520" width="3" height="97" fill="${paint("g")}"/>`;
}

define("pane-keys", class extends Piece {
  css() { return `
    :host{display:flex;gap:2px;position:absolute;right:0;top:1px}
    button{width:37px;height:20px;border:1px solid #8a9aac;border-radius:2px;background:linear-gradient(rgba(255,255,255,.35),rgba(255,255,255,.12) 50%,rgba(0,0,0,.3) 55%);color:#fff;padding:0;display:grid;place-items:center}
    svg{width:14px;height:12px}`; }
  html() {
    const b = (l, d) => `<button aria-label="${l}"><svg viewBox="0 0 14 12"><path d="${d}" fill="none" stroke="#fff" stroke-width="2"/></svg></button>`;
    return b("Minimize pane", "M3 10h8") + b("Maximize pane", "M2 2h10v9H2z") + b("Close pane", "M3 1l8 10M11 1L3 11");
  }
});

define("chart-pane", class extends Piece {
  css() { return `
    :host{display:flex;flex-direction:column;flex:1;min-height:0;background:#000}
    .tools{display:flex;align-items:center;height:36px;flex:none;border-bottom:2px solid #666;background:#000}
    .dd{display:flex;align-items:center;height:30px;background:linear-gradient(#2a2a2a,#141414);color:#fff;position:relative;flex:none}
    .dd select{appearance:none;border:0;background:none;color:#fff;font:15px/20px "Noto Sans","Open Sans",sans-serif;padding:0 20px 0 8px;margin:0;outline:0;width:100%}
    .dd.a{width:115px;margin-left:7px}.dd.b{width:211px}
    .dd.b select{padding-left:3px}
    .dd span{position:absolute;right:0;top:2px;width:20px;height:24px;border-radius:3px;background:linear-gradient(#aaa,#555 50%,#222);display:grid;place-items:center;pointer-events:none}
    .dd span app-icon{--w:10px;--h:8px}
    i{width:2px;height:24px;background:#777;margin:0 5px;flex:none}
    i.near{margin-left:0}
    .tools>button{width:25px;height:27px;margin-right:4px;padding:0;border:0;border-radius:4px;background:linear-gradient(#444,#181818);display:grid;place-items:center;flex:none}
    .tools>.add{margin:0 2px 0 5px}
    .tools>button app-icon{--w:12px;--h:14px}
    .tools>button.z{background:none;width:22px}.tools>button.z app-icon{--w:20px;--h:22px}
    .tools>button.more{width:14px;height:29px;border-radius:0 3px 3px 0;background:linear-gradient(#8fb4d0,#4878a0 50%,#10405f 55%,#2f6f9c);align-items:end;padding-bottom:3px}
    .tools>button.more app-icon{--w:8px;--h:6px}
    .pane{position:relative;display:grid;grid-template-columns:766fr 69fr;min-height:0;overflow:hidden}
    .price{height:252px;flex:none;background:linear-gradient(#000 8%,#041a30 40%,#0b3a6a);border-bottom:2px solid #50708c}
    .price pane-keys{right:-39px}
    .vol{flex:1;background:linear-gradient(#0b3c6c,#0d549a 50%,#1478d8)}
    svg.plot{width:100%;height:100%;display:block;min-height:0;position:absolute;inset:0}
    .area{position:relative}
    .cap{position:absolute;left:3px;top:0;font:700 13px/20px "Liberation Sans",Arial,sans-serif;color:#0f0;white-space:pre}
    .price .cap{top:1px}
    .axis{display:flex;flex-direction:column;justify-content:space-between;padding:43px 0 19px 11px;font:600 13px/16px "Open Sans",sans-serif;color:#fff;position:relative}
    .vol .axis{padding:32px 0 16px 11px}
    mark{position:absolute;left:10px;top:54px;width:42px;height:17px;line-height:17px;background:#0f0;color:#053a05;padding-left:1px}`; }
  html() {
    const bars = VOLUME.split(" ").map(s => { const [x, y] = s.split(","); return `<rect x="${x - 2.5}" y="${parseInt(y)}" width="5.5" height="400" fill="${paint(y.slice(-1))}"/>`; }).join("");
    const t = (n, l, c = "") => `<button class="${c}" aria-label="${l}"><app-icon name="${n}"></app-icon></button>`;
    return `<menu-bar dark items="Actions,View,Line Studies,Charting"></menu-bar>
    <div class="tools"><div class="dd a"><select aria-label="Interval"><option>5 Minute</option></select><span><app-icon name="drop"></app-icon></span></div><i></i>
      <div class="dd b"><select aria-label="Study"><option>Accumulative Swing Index</option></select><span><app-icon name="drop"></app-icon></span></div>
      ${t("plus","Add","add")}<i class="near"></i>${t("left","Back")}${t("right","Forward")}${t("end","Latest")}<i class="near"></i>${t("zoomBox","Zoom area","z")}${t("zoomIn","Zoom in","z")}${t("zoomOut","Zoom out","z")}${t("more","More","more")}</div>
    <section class="pane price"><div class="area"><svg class="plot" viewBox="17 -42 1447 756" preserveAspectRatio="none">${gridLines(28, 660, "#39434c")}${candles()}${dayLines(28, 690)}</svg></div>
      <div class="axis">${["68.230","65.983","63.736","61.489","59.241","56.994","54.747","52.500"].map(v => `<span>${v}</span>`).join("")}<mark>67.150</mark></div>
      <div class="cap">HLF.last -67.150<br>Herbalife Ltd. Common Stock - HLF +13.130 AvgVOL 1,612k</div><pane-keys></pane-keys></section>
    <section class="pane vol"><div class="area"><svg class="plot" viewBox="17 57 1447 723" preserveAspectRatio="none">${gridLines(127, 660, "#28425a")}${dayLines(127, 660)}${bars}</svg></div>
      <div class="axis">${["1,116.975","930.812","744.649","558.487","372.325","186.162"].map(v => `<span>${v}</span>`).join("")}</div>
      <div class="cap">HLF.volume 2,084.000</div><pane-keys></pane-keys></section>`;
  }
});

/* ---------- desktop ---------- */
define("trader-desktop", class extends Piece {
  css() { return `
    :host{display:grid;grid-template-columns:909fr 660fr 831fr;height:100vh;overflow:hidden;background:linear-gradient(#2c0a4e,#b892f0 15%,#5a1f96 40%,#2a0b48 60%,#7a3fc0)}
    .col{display:flex;flex-direction:column;min-width:0;min-height:0}
    .top{display:flex;height:628px;flex:none;margin-right:-15px}
    .main{height:153px;margin-left:2px;--pr:9px;--hr:8px}
    .pos{height:538px;margin-left:2px;--pr:5px}
    .mon{flex:1;margin-right:3px;--pl:7px;--pr:7px;--pb:0px;--title-pad:164px}
    .clk{height:176px;margin-top:2px;--bar:58px;--pl:9px;--pr:12px;--hr:9px;--pb:8px}
    .stk{flex:1;--pl:10px;--pr:4px;--pb:0px;--lead:13px;--align:left;--title-pad:8px}
    .ord{width:538px;margin-left:1px;--pl:6px;--pr:7px;--lead:11px;--iw:15px;--align:left;--title-pad:10px}
    .tas{flex:1;--pr:9px;--pb:14px;--iw:18px;--align:left;--title-pad:8px}
    .cht{flex:1;margin:0 -24px 0 1px;--pl:8px;--pr:9px;--pb:0px;--lead:12px;--iw:15px;--ih:18px;--align:left;--title-pad:12px}`; }
  html() { return `
    <div class="col">
      <desk-window class="main" idle icon="pyramid" heading="GAINWZL01 - Sterling Trader(R) Pro"><menu-bar items="Actions,View,Windows,Help"></menu-bar><main-tools></main-tools></desk-window>
      <desk-window class="pos" icon="pie" heading="GAINWZL01 - Position Summary"><menu-bar items="Actions,Filter,Edit,View"></menu-bar><position-pane></position-pane></desk-window>
      <desk-window class="mon" icon="monitor" heading="GAINWZL01 - Trading Monitor"><menu-bar items="Actions,Filter,Edit,View"></menu-bar><monitor-pane></monitor-pane></desk-window>
    </div>
    <div class="col">
      <desk-window class="clk" icon="clock" heading="GAINWZL01 - Clock"><clock-face></clock-face></desk-window>
      <desk-window class="stk" icon="heat" heading="GAINWZL01 - [stock lists ..."><menu-bar items="Actions,Symbols,View"></menu-bar><stock-pane></stock-pane></desk-window>
    </div>
    <div class="col">
      <div class="top">
        <desk-window class="ord" icon="level" heading="Herbalife Ltd. Co..."><menu-bar items="Actions,View"></menu-bar><order-ticket></order-ticket></desk-window>
        <desk-window class="tas" icon="dollarclock" heading="H..."><menu-bar items="Actions,View"></menu-bar><tick-pane></tick-pane></desk-window>
      </div>
      <desk-window class="cht" icon="candles" heading="Herbalife Ltd. Common Stock - 5 min ..."><chart-pane></chart-pane></desk-window>
    </div>`; }
});
</script>
</body>
</html>
